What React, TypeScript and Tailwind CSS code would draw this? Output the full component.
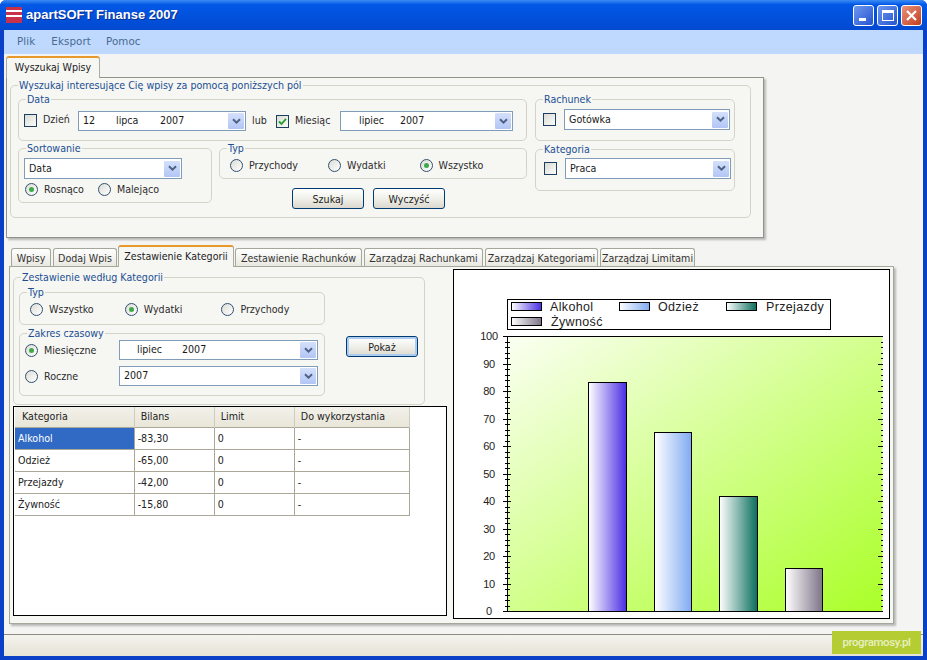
import React from "react";

const FONT = "font-['DejaVu_Sans_Condensed','DejaVu_Sans',sans-serif]";

function Group({ title, className, children }: { title: string; className: string; children?: React.ReactNode }) {
  return (
    <fieldset className={"border border-[#d3d3c7] rounded-[5px] min-w-0 shrink-0 " + className}>
      <legend className="ml-[7px] px-[1px] pt-px text-[10.6px] leading-[13px] text-[#1b4f92]">{title}</legend>
      {children}
    </fieldset>
  );
}

function Check({ on, className = "" }: { on?: boolean; className?: string }) {
  return (
    <span className={"w-[13px] h-[13px] shrink-0 border border-[#1c3f62] bg-gradient-to-br from-[#dcdcd6] to-[#fbfbf8] flex items-center justify-center " + className}>
      {on && (
        <svg width="9" height="9" viewBox="0 0 9 9">
          <path d="M1 4.5 L3.5 7 L8 1.8" fill="none" stroke="#22a02e" strokeWidth="1.8" />
        </svg>
      )}
    </span>
  );
}

function Radio({ on, label, className = "" }: { on?: boolean; label: string; className?: string }) {
  return (
    <span className={"flex items-center shrink-0 " + className}>
      <span className="w-[13px] h-[13px] rounded-full border border-[#32506e] bg-gradient-to-br from-[#dcdcd6] to-[#ffffff] flex items-center justify-center">
        {on && <span className="w-[5px] h-[5px] rounded-full bg-[#3fa94a]" />}
      </span>
      <span className="ml-[6px] text-[10.6px] leading-[14px] text-[#2b2b2b]">{label}</span>
    </span>
  );
}

function Combo({ className, children }: { className: string; children: React.ReactNode }) {
  return (
    <div className={"border border-[#7f9db9] bg-white flex items-center shrink-0 " + className}>
      <div className="flex-1 flex items-center pl-[4px] text-[10.6px] text-[#1a1a1a] whitespace-pre">{children}</div>
      <div className="w-[16px] h-[16px] mr-[1px] rounded-[1px] bg-gradient-to-b from-[#d4e0fb] to-[#b2c6f5] flex items-center justify-center">
        <svg width="9" height="7" viewBox="0 0 9 7">
          <path d="M1 1.2 L4.5 4.7 L8 1.2" fill="none" stroke="#4d6185" strokeWidth="2" />
        </svg>
      </div>
    </div>
  );
}

function Btn({ label, def, className = "" }: { label: string; def?: boolean; className?: string }) {
  return (
    <button
      className={
        "w-[72px] h-[21px] border border-[#003c74] rounded-[3px] bg-gradient-to-b from-[#ffffff] via-[#f0f0ea] to-[#dcd8ce] text-[10.6px] leading-[18px] text-[#222] shrink-0 " +
        (def ? "shadow-[inset_0_0_0_2px_#aecbf0] " : "") +
        className
      }
    >
      {label}
    </button>
  );
}

function Tab({ label, active, w }: { label: string; active?: boolean; w: string }) {
  return active ? (
    <div className={"relative z-10 -mb-px -mx-px h-[22px] border border-[#a9ad9d] border-b-0 border-t-2 border-t-[#e69a2c] rounded-t-[3px] bg-[#f6f6f3] text-center text-[10.6px] leading-[18px] text-[#222] whitespace-nowrap " + w}>
      {label}
    </div>
  ) : (
    <div className={"h-[18px] border border-[#a4a89a] border-b-0 rounded-t-[3px] bg-gradient-to-b from-[#ffffff] to-[#e9e8e0] text-center text-[10.6px] leading-[18px] text-[#333] whitespace-nowrap " + w}>
      {label}
    </div>
  );
}

const rows = [
  ["Alkohol", "-83,30", "0", "-"],
  ["Odzież", "-65,00", "0", "-"],
  ["Przejazdy", "-42,00", "0", "-"],
  ["Żywność", "-15,80", "0", "-"],
];

const bars = [
  { x: 588.5, w: 38, v: 83.3, id: "gA" },
  { x: 654.5, w: 37, v: 65, id: "gB" },
  { x: 719.5, w: 38, v: 42, id: "gC" },
  { x: 785.5, w: 37, v: 15.8, id: "gD" },
];

const grads = [
  { id: "gA", c: "#4a2ee2" },
  { id: "gB", c: "#7fabf2" },
  { id: "gC", c: "#0a6e5c" },
  { id: "gD", c: "#7d7488" },
];

const Y = (v: number) => 611 - 2.75 * v;

function Chart() {
  const ticks = Array.from({ length: 51 }, (_, i) => i * 2);
  const legend = [
    { x: 511, y: 302, id: "gA", t: "Alkohol", tx: 550, ty: 311 },
    { x: 619, y: 302, id: "gB", t: "Odzież", tx: 658, ty: 311 },
    { x: 726, y: 302, id: "gC", t: "Przejazdy", tx: 766, ty: 311 },
    { x: 511, y: 317, id: "gD", t: "Żywność", tx: 551, ty: 326 },
  ];
  return (
    <svg width="435" height="348" className="block">
      <defs>
        <linearGradient id="plot" x1="0" y1="0" x2="1" y2="1">
          <stop offset="0" stopColor="#fbfff2" />
          <stop offset="1" stopColor="#aaff28" />
        </linearGradient>
        {grads.map((g) => (
          <linearGradient key={g.id} id={g.id} x1="0" y1="0" x2="1" y2="0">
            <stop offset="0" stopColor="#ffffff" />
            <stop offset="1" stopColor={g.c} />
          </linearGradient>
        ))}
      </defs>
      <g transform="translate(-454 -270)" fontFamily="'Liberation Sans', sans-serif">
        <rect x="507.5" y="299.5" width="323" height="30" fill="#fff" stroke="#000" />
        {legend.map((l) => (
          <g key={l.t}>
            <rect x={l.x + 0.5} y={l.y + 0.5} width="30" height="8" fill={`url(#${l.id})`} stroke="#000" />
            <text x={l.tx} y={l.ty} fontSize="12.5" letterSpacing="0.35" fill="#222">{l.t}</text>
          </g>
        ))}
        <rect x="507.5" y="336.5" width="375" height="275" fill="url(#plot)" />
        <path d="M507.5 336.5 H882.5 M507.5 336 V612 M503 611.5 H883" stroke="#000" fill="none" />
        {ticks.map((v) => {
          const major = v % 10 === 0;
          const y = Math.round(Y(v)) + 0.5;
          return (
            <g key={v}>
              <path d={major ? `M503 ${y} H511` : `M505 ${y} H510`} stroke="#000" />
              <path d={major ? `M878 ${y} H883` : `M881 ${y} H883`} stroke="#000" />
            </g>
          );
        })}
        {ticks.filter((v) => v % 10 === 0).map((v) => (
          <text key={v} x="489" y={Math.round(Y(v)) + 4} textAnchor="middle" fontSize="11" letterSpacing="-0.3" fill="#222">{v}</text>
        ))}
        {bars.map((b) => (
          <rect key={b.id} x={b.x} y={Math.round(Y(b.v)) + 0.5} width={b.w} height={611 - Math.round(Y(b.v))} fill={`url(#${b.id})`} stroke="#000" />
        ))}
      </g>
    </svg>
  );
}

export default function App() {
  return (
    <div className={"relative w-[927px] h-[660px] overflow-hidden flex flex-col bg-[#0a3fc8] rounded-t-[6px] " + FONT}>
      {/* title bar */}
      <div className="h-[30px] shrink-0 flex items-center bg-gradient-to-b from-[#3a8df5] via-[#0258e6] via-[15%] to-[#0249d0] pl-[6px] pr-[5px]">
        <svg width="16" height="16" viewBox="0 0 16 16" className="shrink-0">
          <rect width="16" height="16" fill="#fff" />
          <rect y="0" width="16" height="3" fill="#c8314a" />
          <rect y="5" width="16" height="3" fill="#c8314a" />
          <rect y="10" width="16" height="6" fill="#c8314a" />
        </svg>
        <span className="ml-[4px] text-[13px] font-bold text-white font-['Liberation_Sans',sans-serif] [text-shadow:1px_1px_0_#0a2f90]">apartSOFT Finanse 2007</span>
        <div className="ml-auto flex gap-[3px]">
          <div className="w-[21px] h-[21px] rounded-[3px] border border-white bg-gradient-to-br from-[#6f97ee] to-[#2453cf] flex items-end pl-[5px] pb-[4px]">
            <span className="w-[7px] h-[3px] bg-white" />
          </div>
          <div className="w-[21px] h-[21px] rounded-[3px] border border-white bg-gradient-to-br from-[#6f97ee] to-[#2453cf] flex items-center justify-center">
            <span className="w-[12px] h-[11px] border border-white border-t-[3px]" />
          </div>
          <div className="w-[21px] h-[21px] rounded-[3px] border border-white bg-gradient-to-br from-[#e8917a] to-[#c13b1c] flex items-center justify-center">
            <svg width="13" height="13" viewBox="0 0 13 13">
              <path d="M2 2 L11 11 M11 2 L2 11" stroke="#fff" strokeWidth="2.2" />
            </svg>
          </div>
        </div>
      </div>

      <div className="flex-1 mx-[4px] flex flex-col min-h-0 bg-[#f4f4f2]">
        {/* menu */}
        <div className="h-[24px] shrink-0 bg-[#bed9fd] flex items-center pl-[13px] text-[10.3px] tracking-[0.1px] text-[#4a6a92] font-['DejaVu_Sans',sans-serif]">
          <span>Plik</span>
          <span className="ml-[16px]">Eksport</span>
          <span className="ml-[15px]">Pomoc</span>
        </div>

        <div className="flex-1 min-h-0 flex flex-col pt-[3px]">
          {/* upper search block */}
          <div className="ml-[2px] w-[758px] shrink-0">
            <div className="flex h-[20px] items-end pl-px">
              <Tab label="Wyszukaj Wpisy" active w="w-[94px]" />
            </div>
            <div className="h-[161px] border border-[#8f938a] bg-[#f6f6f3] pl-[3px] shadow-[2px_2px_2px_rgba(0,0,0,0.25)]">
              <Group title="Wyszukaj interesujące Cię wpisy za pomocą poniższych pól" className="w-[741px] h-[140px]">
                <div className="flex pl-[7px] gap-[8px]">
                  <div className="w-[509px]">
                    <Group title="Data" className="w-[509px] h-[49px]">
                      <div className="flex items-center pl-[5px] mt-[5px]">
                        <Check className="-mt-[2px]" />
                        <span className="ml-[6px] w-[35px] -mt-[2px] text-[10.6px] text-[#2b2b2b]">Dzień</span>
                        <Combo className="w-[168px] h-[20px]">
                          <span className="w-[33px]">12</span>
                          <span className="w-[44px]">lipca</span>
                          <span>2007</span>
                        </Combo>
                        <span className="ml-[6px] w-[24px] text-[10.6px] text-[#2b2b2b]">lub</span>
                        <Check on />
                        <span className="ml-[6px] w-[45px] text-[10.6px] text-[#2b2b2b]">Miesiąc</span>
                        <Combo className="w-[173px] h-[20px]">
                          <span className="ml-[14px] w-[41px]">lipiec</span>
                          <span>2007</span>
                        </Combo>
                      </div>
                    </Group>
                    <div className="flex gap-[7px]">
                      <Group title="Sortowanie" className="w-[194px] h-[62px]">
                        <div className="pl-[5px] pt-[3px]">
                          <Combo className="w-[158px] h-[21px]">Data</Combo>
                          <div className="flex mt-[3px]">
                            <Radio on label="Rosnąco" className="ml-[1px]" />
                            <Radio label="Malejąco" className="ml-[14px]" />
                          </div>
                        </div>
                      </Group>
                      <div>
                        <Group title="Typ" className="w-[308px] h-[38px]">
                          <div className="flex pl-[10px] pt-[3px]">
                            <Radio label="Przychody" />
                            <Radio label="Wydatki" className="ml-[30px]" />
                            <Radio on label="Wszystko" className="ml-[34px]" />
                          </div>
                        </Group>
                        <div className="flex mt-[9px] ml-[73px] gap-[9px]">
                          <Btn label="Szukaj" />
                          <Btn label="Wyczyść" />
                        </div>
                      </div>
                    </div>
                  </div>
                  <div className="w-[200px]">
                    <Group title="Rachunek" className="w-[200px] h-[49px]">
                      <div className="flex items-center pl-[7px] mt-[3px]">
                        <Check />
                        <Combo className="ml-[8px] w-[166px] h-[21px]">Gotówka</Combo>
                      </div>
                    </Group>
                    <Group title="Kategoria" className="w-[200px] h-[49px] mt-px">
                      <div className="flex items-center pl-[8px] mt-[2px]">
                        <Check />
                        <Combo className="ml-[8px] w-[166px] h-[21px]">Praca</Combo>
                      </div>
                    </Group>
                  </div>
                </div>
              </Group>
            </div>
          </div>

          {/* lower tabs */}
          <div className="ml-[5px] w-[885px] mt-[7px] shrink-0">
            <div className="flex h-[21px] items-end gap-[2px] pl-[2px]">
              <Tab label="Wpisy" w="w-[40px]" />
              <Tab label="Dodaj Wpis" w="w-[64px]" />
              <Tab label="Zestawienie Kategorii" active w="w-[116px]" />
              <Tab label="Zestawienie Rachunków" w="w-[127px]" />
              <Tab label="Zarządzaj Rachunkami" w="w-[119px]" />
              <Tab label="Zarządzaj Kategoriami" w="w-[113px]" />
              <Tab label="Zarządzaj Limitami" w="w-[95px]" />
            </div>
            <div className="h-[358px] border border-[#a4a89a] bg-[#f6f6f3] shadow-[2px_2px_2px_rgba(0,0,0,0.25)] flex pl-[3px] pt-[2px]">
              <div className="w-[434px] pt-px shrink-0">
                <Group title="Zestawienie według Kategorii" className="w-[412px] h-[135px]">
                  <div className="flex pl-[5px] pt-px">
                    <div>
                      <Group title="Typ" className="w-[306px] h-[40px]">
                        <div className="flex pl-[10px] pt-[3px]">
                          <Radio label="Wszystko" />
                          <Radio on label="Wydatki" className="ml-[31px]" />
                          <Radio label="Przychody" className="ml-[39px]" />
                        </div>
                      </Group>
                      <Group title="Zakres czasowy" className="w-[306px] h-[70px] mt-px">
                        <div className="pl-[5px] pr-[6px]">
                          <div className="flex items-center h-[20px]">
                            <Radio on label="Miesięczne" className="w-[94px]" />
                            <Combo className="w-[199px] h-[20px]">
                              <span className="ml-[13px] w-[45px]">lipiec</span>
                              <span>2007</span>
                            </Combo>
                          </div>
                          <div className="flex items-center h-[20px] mt-[6px]">
                            <Radio label="Roczne" className="w-[94px]" />
                            <Combo className="w-[199px] h-[20px]">2007</Combo>
                          </div>
                        </div>
                      </Group>
                    </div>
                    <Btn def label="Pokaż" className="ml-[21px] mt-[51px]" />
                  </div>
                </Group>
                <div className="w-[434px] h-[210px] mt-px border border-black bg-white pl-px">
                  <table className="table-fixed border-collapse w-[395px] text-[10.6px] text-[#222]">
                    <colgroup>
                      <col className="w-[119px]" />
                      <col className="w-[80px]" />
                      <col className="w-[80px]" />
                      <col className="w-[115px]" />
                    </colgroup>
                    <thead>
                      <tr className="h-[20px] bg-gradient-to-b from-[#f2f1ea] to-[#e8e6d8]">
                        {["Kategoria", "Bilans", "Limit", "Do wykorzystania"].map((h, i) => (
                          <th key={h} className={"font-normal text-left pt-px border-r border-[#cfccbc] " + (i === 0 ? "pl-[7px]" : "pl-[6px]")}>{h}</th>
                        ))}
                      </tr>
                    </thead>
                    <tbody>
                      {rows.map((r, ri) => (
                        <tr key={r[0]} className="h-[22px]">
                          {r.map((c, ci) => (
                            <td
                              key={ci}
                              className={
                                "border border-[#aca899] pl-[3px] pt-[2px] " +
                                (ci === 0 ? "border-l-0 " : "") +
                                (ri === 0 && ci === 0 ? "bg-[#316ac5] text-white" : "")
                              }
                            >
                              {c}
                            </td>
                          ))}
                        </tr>
                      ))}
                    </tbody>
                  </table>
                </div>
              </div>
              <div className="ml-[6px] w-[437px] h-[350px] border border-black bg-white shrink-0">
                <Chart />
              </div>
            </div>
          </div>

          {/* status bar */}
          <div className="mt-auto h-[22px] shrink-0 border-t border-[#8b8b80] bg-gradient-to-b from-[#f4f3ee] to-[#e6e3d6]" />
        </div>
      </div>
      <div className="h-[4px] shrink-0" />

      <div className="absolute left-[832px] top-[631px] w-[89px] h-[23px] bg-[#b5cc32] flex items-center justify-center text-[11.5px] tracking-[-0.4px] font-medium text-[#e6f0c0] font-['Roboto',sans-serif]">
        programosy.pl
      </div>
    </div>
  );
}
